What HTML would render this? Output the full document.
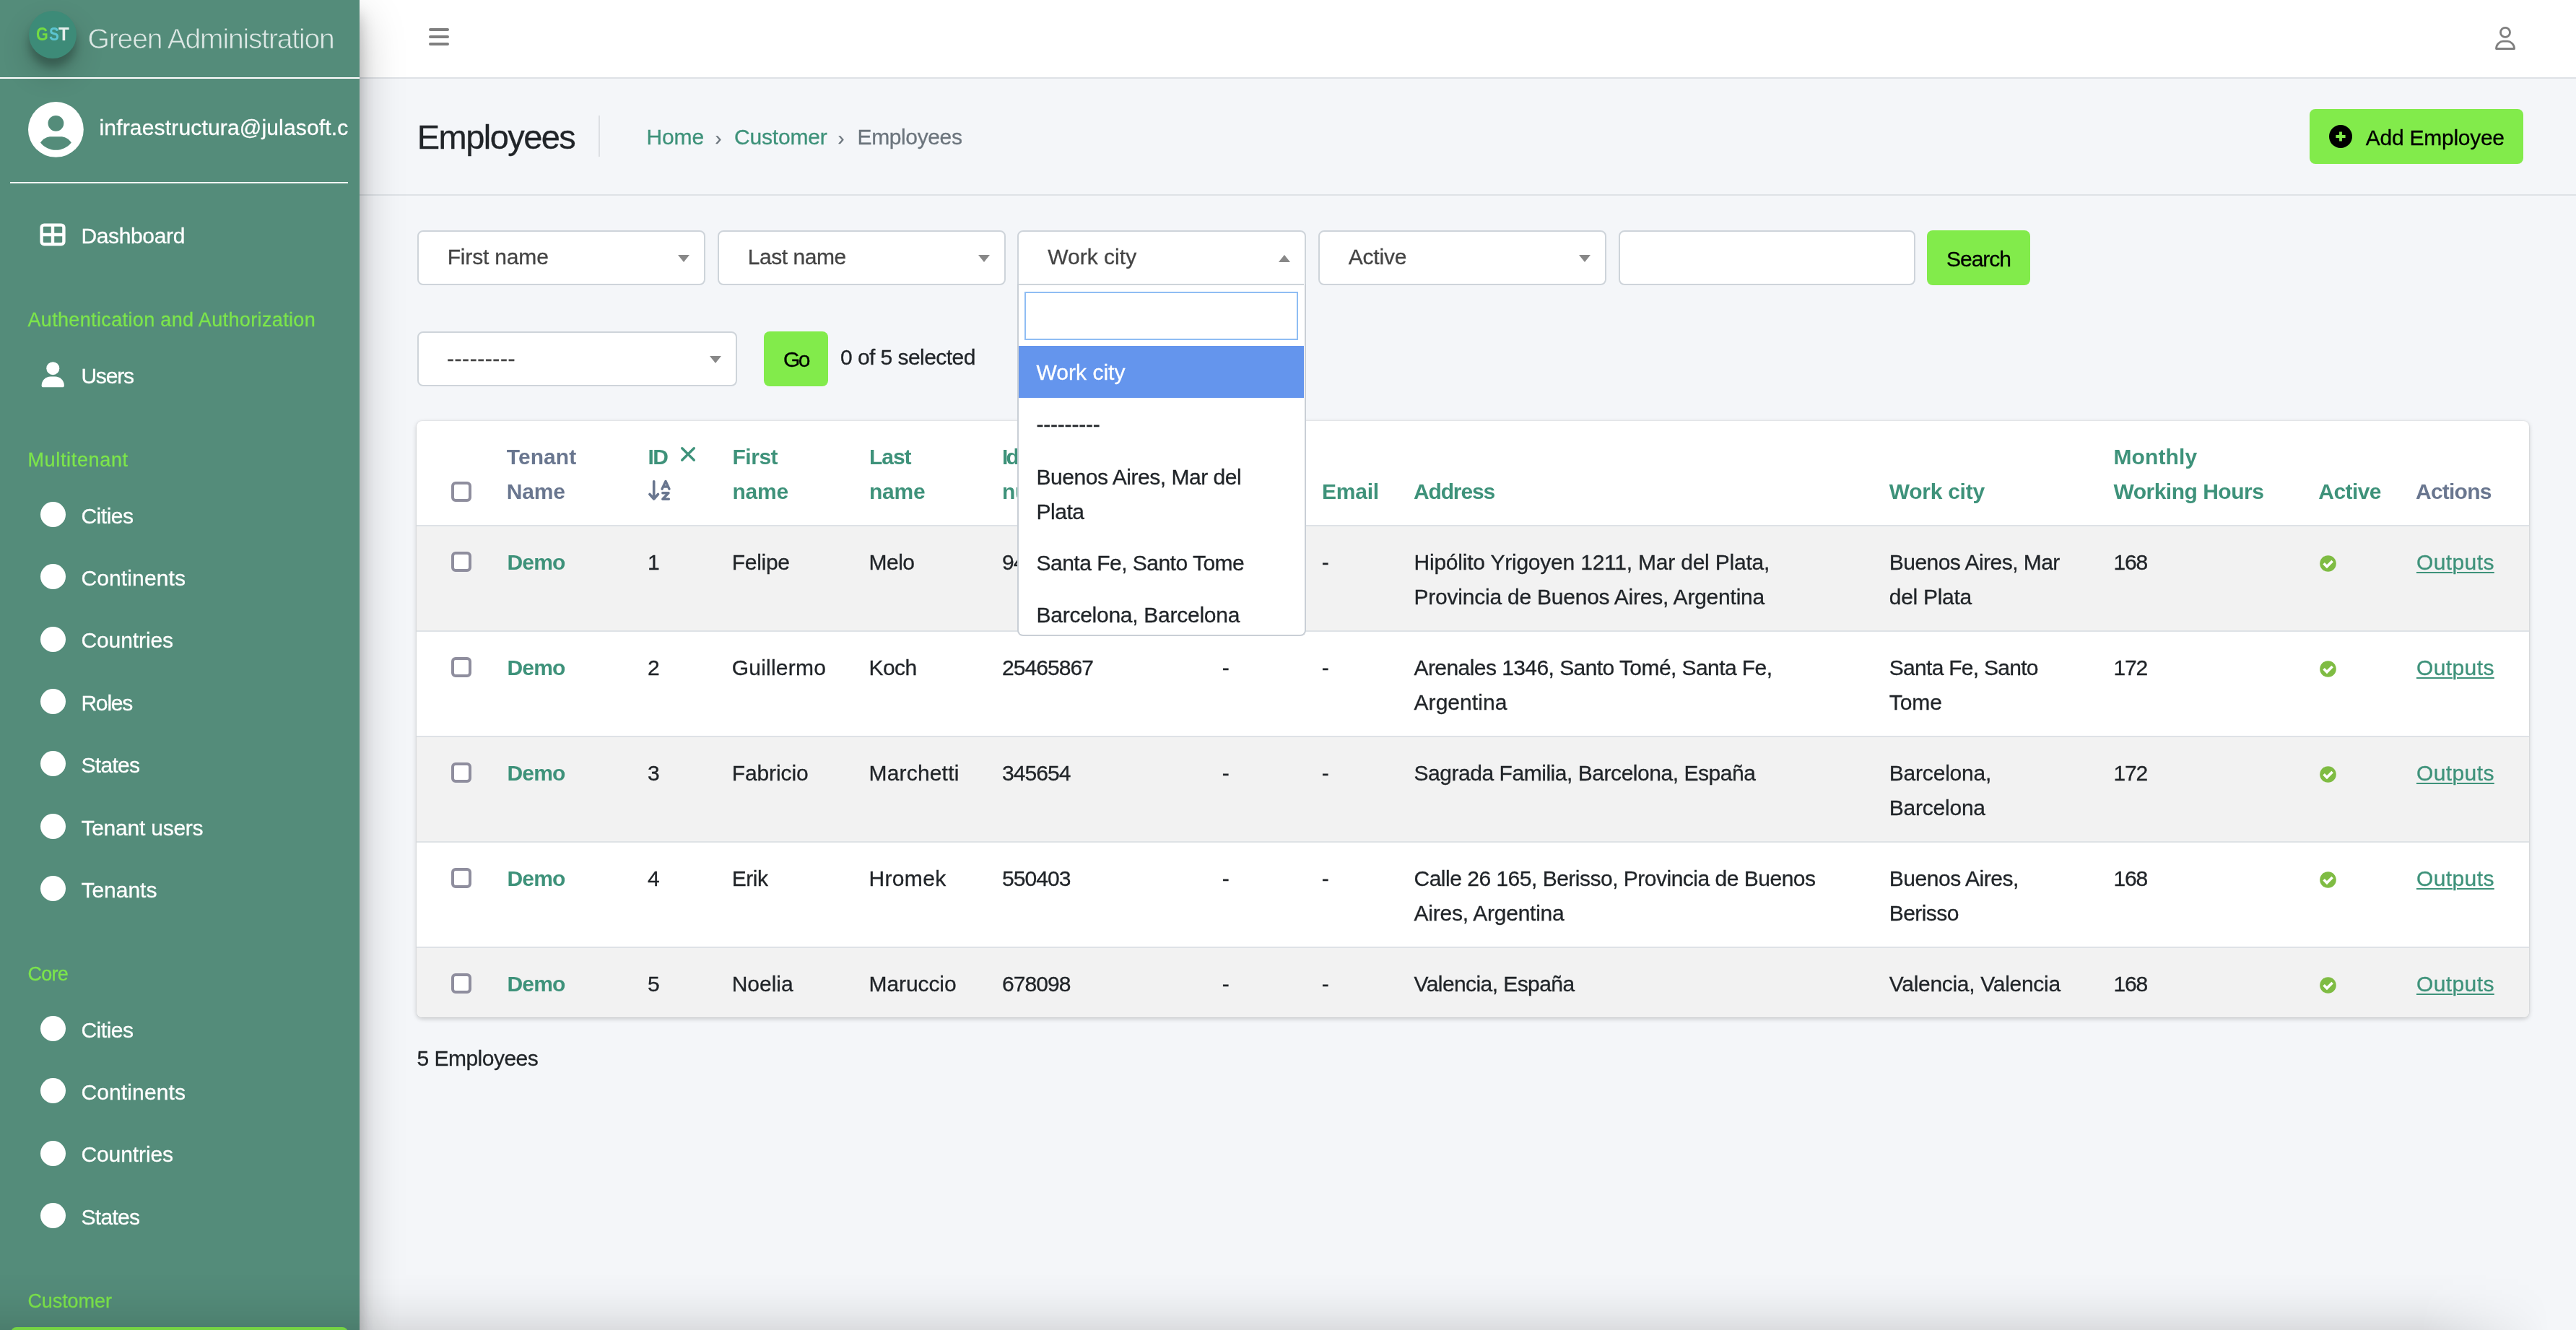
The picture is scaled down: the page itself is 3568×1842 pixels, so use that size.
<!DOCTYPE html>
<html lang="en"><head><meta charset="utf-8"><title>Employees | Green Administration</title>
<style>
*{box-sizing:border-box}
html,body{margin:0;padding:0}
body{width:3568px;height:1842px;overflow:hidden;position:relative;background:#f4f6f9;font-family:"Liberation Sans",sans-serif;font-size:30px;color:#212529}
.t{position:absolute;white-space:nowrap;line-height:1;display:block}
.r{-webkit-text-stroke:.3px}
.a{position:absolute}
#sidebar{left:0;top:0;width:498px;height:1842px;background:#548c7a;box-shadow:0 28px 56px rgba(0,0,0,.25),0 20px 20px rgba(0,0,0,.22);z-index:5;overflow:hidden}
#navbar{left:498px;top:0;width:3070px;height:109px;background:#fff;border-bottom:2px solid #dee2e6}
#chead{left:498px;top:109px;width:3070px;height:162px;border-bottom:2px solid #dee2e6}
.sel{position:absolute;height:76px;background:#fff;border:2px solid #ced4da;border-radius:8px}
.arr{position:absolute;width:0;height:0;border-left:8px solid transparent;border-right:8px solid transparent;border-top:10px solid #888}
.arr.up{border-top:0;border-bottom:10px solid #888}
.btn{position:absolute;background:#82eb4b;border-radius:8px}
.dot{position:absolute;width:35px;height:35px;border-radius:50%;background:#fff;left:55.5px}
.cb{position:absolute;width:28px;height:28px;border:4px solid #8f8e9e;border-radius:6px;background:#fff;left:625px}
.row{position:absolute;left:0;width:2926px;border-top:2px solid #dee2e6}
.odd{background:#f2f2f2}
#card{left:577px;top:582.5px;width:2926px;height:826.5px;background:#fff;border-radius:8px;box-shadow:0 0 2px rgba(0,0,0,.125),0 2px 6px rgba(0,0,0,.2);overflow:hidden}
.u{text-decoration:underline;text-decoration-thickness:2px;text-underline-offset:3px}
#all{position:absolute;left:0;top:0;width:3568px;height:1842px;will-change:transform}
</style></head><body><div id="all">

<div class="a" id="navbar"></div>
<svg class="a" style="left:594px;top:39px" width="28" height="24" viewBox="0 0 28 24"><g fill="#7f7f7f"><rect x="0" y="0" width="28" height="4" rx="2"></rect><rect x="0" y="10" width="28" height="4" rx="2"></rect><rect x="0" y="20" width="28" height="4" rx="2"></rect></g></svg>
<svg class="a" style="left:3455px;top:36px" width="30" height="34" viewBox="0 0 30 34"><g fill="none" stroke="#7f7f7f" stroke-width="2.8"><circle cx="15" cy="8.9" r="6.5"></circle><path d="M2.5 31.5 C2.5 25 8 21.2 12 21.2 H18 C22 21.2 27.6 25 27.6 31.5 Z" stroke-linejoin="round"></path></g></svg>
<div class="a" id="chead"></div>
<span class="t r" style="left: 577.8px; top: 165.9px; font-size: 47px; color: rgb(33, 37, 41); letter-spacing: -1.556px;">Employees</span>
<div class="a" style="left:829px;top:160px;width:2px;height:57px;background:#dcdfe3"></div>
<span class="t r" style="left: 895.5px; top: 175.2px; font-size: 30px; color: rgb(62, 146, 122); letter-spacing: -0.133px;">Home</span>
<span class="t r" style="left:990.5px;top:178.9px;font-size:27px;color:#6c757d;">›</span>
<span class="t r" style="left: 1017px; top: 175.2px; font-size: 30px; color: rgb(62, 146, 122); letter-spacing: -0.193px;">Customer</span>
<span class="t r" style="left:1160.5px;top:178.9px;font-size:27px;color:#6c757d;">›</span>
<span class="t r" style="left: 1187.5px; top: 175.2px; font-size: 30px; color: rgb(108, 117, 125); letter-spacing: -0.378px;">Employees</span>
<div class="btn" style="left:3199px;top:151px;width:296px;height:76px"></div>
<svg class="a" style="left:3225.5px;top:172.8px" width="32" height="32" viewBox="0 0 32 32"><circle cx="16" cy="16" r="16" fill="#000"></circle><path d="M16 9.4v13.2M9.4 16h13.2" stroke="#82eb4b" stroke-width="3.8"></path></svg>
<span class="t r" style="left: 3276.8px; top: 175.6px; font-size: 30px; color: rgb(0, 0, 0); letter-spacing: -0.26px;">Add Employee</span>
<div class="sel" style="left:577.5px;top:319px;width:399px;"></div>
<div class="arr" style="left:939.0px;top:353px"></div>
<span class="t r" style="left: 619.7px; top: 340.8px; font-size: 30px; color: rgb(68, 68, 68); letter-spacing: -0.17px;">First name</span>
<div class="sel" style="left:993.5px;top:319px;width:399px;"></div>
<div class="arr" style="left:1355.0px;top:353px"></div>
<span class="t r" style="left: 1035.7px; top: 340.8px; font-size: 30px; color: rgb(68, 68, 68); letter-spacing: -0.455px;">Last name</span>
<div class="sel" style="left:1409px;top:319px;width:399.5px;border-radius:8px 8px 0 0;"></div>
<div class="arr up" style="left:1771.0px;top:353px"></div>
<span class="t r" style="left: 1451.2px; top: 340.8px; font-size: 30px; color: rgb(68, 68, 68); letter-spacing: 0.023px;">Work city</span>
<div class="sel" style="left:1825.5px;top:319px;width:399px;"></div>
<div class="arr" style="left:2187.0px;top:353px"></div>
<span class="t r" style="left: 1867.7px; top: 340.8px; font-size: 30px; color: rgb(68, 68, 68); letter-spacing: -0.201px;">Active</span>
<div class="sel" style="left:2242px;top:319px;width:410.5px"></div>
<div class="btn" style="left:2669px;top:319px;width:143px;height:76px"></div>
<span class="t r" style="left: 2696px; top: 344.2px; font-size: 30px; color: rgb(0, 0, 0); letter-spacing: -1.01px;">Search</span>
<div class="sel" style="left:577.5px;top:459px;width:443px;height:76px"></div>
<div class="arr" style="left:983px;top:492.5px"></div>
<span class="t r" style="left: 619px; top: 481.6px; font-size: 30px; color: rgb(68, 68, 68); letter-spacing: 0.564px;">---------</span>
<div class="btn" style="left:1058px;top:459px;width:89px;height:76px"></div>
<span class="t r" style="left: 1085px; top: 483px; font-size: 30px; color: rgb(0, 0, 0); letter-spacing: -2.516px;">Go</span>
<span class="t r" style="left: 1164px; top: 480px; font-size: 30px; letter-spacing: -0.556px;">0 of 5 selected</span>
<div class="a" id="card">
<div class="row odd" style="top:144.5px;height:148.0px"></div>
<div class="row" style="top:290.5px;height:148.0px"></div>
<div class="row odd" style="top:436.5px;height:148.0px"></div>
<div class="row" style="top:582.5px;height:148.0px"></div>
<div class="row odd" style="top:728.5px;height:98.5px"></div>
</div>
<div class="cb" style="top:666.5px"></div>
<span class="t " style="left: 701.8px; top: 617.8px; font-size: 30px; font-weight: 700; color: rgb(105, 118, 143); letter-spacing: 0.048px;">Tenant</span>
<span class="t " style="left: 701.8px; top: 665.6px; font-size: 30px; font-weight: 700; color: rgb(105, 118, 143); letter-spacing: -0.18px;">Name</span>
<span class="t " style="left: 897.5px; top: 617.8px; font-size: 30px; font-weight: 700; color: rgb(62, 146, 122); letter-spacing: -1.5px;">ID</span>
<svg class="a" style="left:941px;top:617px" width="24" height="24" viewBox="0 0 24 24"><path d="M3.7 3.7 L20.3 20.3 M20.3 3.7 L3.7 20.3" stroke="#3e927a" stroke-width="3.4" stroke-linecap="round" fill="none"></path></svg>
<svg class="a" style="left:896px;top:663px" width="36" height="32" viewBox="0 0 36 32"><g fill="none" stroke="#69768f" stroke-width="3.6" stroke-linecap="round" stroke-linejoin="round"><path d="M9.7 3.8 V27.5 M3.9 21.5 L9.7 28 L15.5 21.5"></path><path d="M21 14.2 L26 3.6 L31 14.2 M23 11 H29" stroke-width="3.4"></path><path d="M21.8 19.8 H30 L21.8 28.2 H30.4" stroke-width="3.4"></path></g></svg>
<span class="t " style="left: 1014.5px; top: 617.8px; font-size: 30px; font-weight: 700; color: rgb(62, 146, 122); letter-spacing: -0.483px;">First</span>
<span class="t " style="left: 1014.5px; top: 665.6px; font-size: 30px; font-weight: 700; color: rgb(62, 146, 122); letter-spacing: -0.219px;">name</span>
<span class="t " style="left: 1204px; top: 617.8px; font-size: 30px; font-weight: 700; color: rgb(62, 146, 122); letter-spacing: -1.047px;">Last</span>
<span class="t " style="left: 1204px; top: 665.6px; font-size: 30px; font-weight: 700; color: rgb(62, 146, 122); letter-spacing: -0.219px;">name</span>
<span class="t " style="left: 1388px; top: 617.8px; font-size: 30px; font-weight: 700; color: rgb(62, 146, 122); letter-spacing: -2.836px;">Id</span>
<span class="t " style="left: 1388px; top: 665.6px; font-size: 30px; font-weight: 700; color: rgb(62, 146, 122); letter-spacing: -0.336px;">number</span>
<span class="t " style="left: 1692px; top: 665.6px; font-size: 30px; font-weight: 700; color: rgb(62, 146, 122); letter-spacing: -0.734px;">Phone</span>
<span class="t " style="left: 1831px; top: 665.6px; font-size: 30px; font-weight: 700; color: rgb(62, 146, 122); letter-spacing: -0.209px;">Email</span>
<span class="t " style="left: 1958px; top: 665.6px; font-size: 30px; font-weight: 700; color: rgb(62, 146, 122); letter-spacing: -1.15px;">Address</span>
<span class="t " style="left: 2616.8px; top: 665.6px; font-size: 30px; font-weight: 700; color: rgb(62, 146, 122); letter-spacing: -0.278px;">Work city</span>
<span class="t " style="left: 2927.4px; top: 617.8px; font-size: 30px; font-weight: 700; color: rgb(62, 146, 122); letter-spacing: 0.145px;">Monthly</span>
<span class="t " style="left: 2927.4px; top: 665.6px; font-size: 30px; font-weight: 700; color: rgb(62, 146, 122); letter-spacing: -0.496px;">Working Hours</span>
<span class="t " style="left: 3211.3px; top: 665.6px; font-size: 30px; font-weight: 700; color: rgb(62, 146, 122); letter-spacing: -0.558px;">Active</span>
<span class="t " style="left: 3346px; top: 665.6px; font-size: 30px; font-weight: 700; color: rgb(105, 118, 143); letter-spacing: -0.774px;">Actions</span>
<div class="cb" style="top:764px"></div>
<span class="t " style="left: 702.5px; top: 763.6px; font-size: 30px; font-weight: 700; color: rgb(62, 146, 122); letter-spacing: -0.84px;">Demo</span>
<span class="t r" style="left: 897px; top: 763.6px; font-size: 30px; letter-spacing: -1.688px;">1</span>
<span class="t r" style="left: 1013.7px; top: 763.6px; font-size: 30px; letter-spacing: -0.286px;">Felipe</span>
<span class="t r" style="left: 1203.5px; top: 763.6px; font-size: 30px; letter-spacing: -0.508px;">Melo</span>
<span class="t r" style="left: 1388px; top: 763.6px; font-size: 30px; letter-spacing: -0.936px;">94321756</span>
<span class="t r" style="left: 1692.8px; top: 763.6px; font-size: 30px; letter-spacing: -1px;">-</span>
<span class="t r" style="left: 1830.8px; top: 763.6px; font-size: 30px; letter-spacing: -1px;">-</span>
<span class="t r" style="left: 1958.5px; top: 763.6px; font-size: 30px; letter-spacing: -0.217px;">Hipólito Yrigoyen 1211, Mar del Plata,</span>
<span class="t r" style="left: 1958.5px; top: 811.6px; font-size: 30px; letter-spacing: -0.226px;">Provincia de Buenos Aires, Argentina</span>
<span class="t r" style="left: 2616.8px; top: 763.6px; font-size: 30px; letter-spacing: -0.537px;">Buenos Aires, Mar</span>
<span class="t r" style="left: 2616.8px; top: 811.6px; font-size: 30px; letter-spacing: -0.306px;">del Plata</span>
<span class="t r" style="left: 2927.5px; top: 763.6px; font-size: 30px; letter-spacing: -1.188px;">168</span>
<svg class="a" style="left:3212.5px;top:769.3px" width="23" height="23" viewBox="0 0 23 23"><circle cx="11.5" cy="11.5" r="11.3" fill="#7fbc43"></circle><path d="M5.6 11.3 L10 15.6 L17.6 8" stroke="#fff" stroke-width="3.6" fill="none"></path></svg>
<span class="t u r" style="left: 3347px; top: 763.6px; font-size: 30px; color: rgb(62, 146, 122); letter-spacing: 0.391px;">Outputs</span>
<div class="cb" style="top:910px"></div>
<span class="t " style="left: 702.5px; top: 909.6px; font-size: 30px; font-weight: 700; color: rgb(62, 146, 122); letter-spacing: -0.84px;">Demo</span>
<span class="t r" style="left: 897px; top: 909.6px; font-size: 30px; letter-spacing: -1.688px;">2</span>
<span class="t r" style="left: 1013.7px; top: 909.6px; font-size: 30px; letter-spacing: 0.225px;">Guillermo</span>
<span class="t r" style="left: 1203.5px; top: 909.6px; font-size: 30px; letter-spacing: -0.598px;">Koch</span>
<span class="t r" style="left: 1388px; top: 909.6px; font-size: 30px; letter-spacing: -0.936px;">25465867</span>
<span class="t r" style="left: 1692.8px; top: 909.6px; font-size: 30px; letter-spacing: -1px;">-</span>
<span class="t r" style="left: 1830.8px; top: 909.6px; font-size: 30px; letter-spacing: -1px;">-</span>
<span class="t r" style="left: 1958.5px; top: 909.6px; font-size: 30px; letter-spacing: -0.568px;">Arenales 1346, Santo Tomé, Santa Fe,</span>
<span class="t r" style="left: 1958.5px; top: 957.6px; font-size: 30px; letter-spacing: 0.063px;">Argentina</span>
<span class="t r" style="left: 2616.8px; top: 909.6px; font-size: 30px; letter-spacing: -0.721px;">Santa Fe, Santo</span>
<span class="t r" style="left: 2616.8px; top: 957.6px; font-size: 30px; letter-spacing: -0.09px;">Tome</span>
<span class="t r" style="left: 2927.5px; top: 909.6px; font-size: 30px; letter-spacing: -1.188px;">172</span>
<svg class="a" style="left:3212.5px;top:915.3px" width="23" height="23" viewBox="0 0 23 23"><circle cx="11.5" cy="11.5" r="11.3" fill="#7fbc43"></circle><path d="M5.6 11.3 L10 15.6 L17.6 8" stroke="#fff" stroke-width="3.6" fill="none"></path></svg>
<span class="t u r" style="left: 3347px; top: 909.6px; font-size: 30px; color: rgb(62, 146, 122); letter-spacing: 0.391px;">Outputs</span>
<div class="cb" style="top:1056px"></div>
<span class="t " style="left: 702.5px; top: 1055.6px; font-size: 30px; font-weight: 700; color: rgb(62, 146, 122); letter-spacing: -0.84px;">Demo</span>
<span class="t r" style="left: 897px; top: 1055.6px; font-size: 30px; letter-spacing: -1.688px;">3</span>
<span class="t r" style="left: 1013.7px; top: 1055.6px; font-size: 30px; letter-spacing: -0.088px;">Fabricio</span>
<span class="t r" style="left: 1203.5px; top: 1055.6px; font-size: 30px; letter-spacing: 0.181px;">Marchetti</span>
<span class="t r" style="left: 1388px; top: 1055.6px; font-size: 30px; letter-spacing: -0.935px;">345654</span>
<span class="t r" style="left: 1692.8px; top: 1055.6px; font-size: 30px; letter-spacing: -1px;">-</span>
<span class="t r" style="left: 1830.8px; top: 1055.6px; font-size: 30px; letter-spacing: -1px;">-</span>
<span class="t r" style="left: 1958.5px; top: 1055.6px; font-size: 30px; letter-spacing: -0.46px;">Sagrada Familia, Barcelona, España</span>
<span class="t r" style="left: 2616.8px; top: 1055.6px; font-size: 30px; letter-spacing: -0.204px;">Barcelona,</span>
<span class="t r" style="left: 2616.8px; top: 1103.6px; font-size: 30px; letter-spacing: -0.233px;">Barcelona</span>
<span class="t r" style="left: 2927.5px; top: 1055.6px; font-size: 30px; letter-spacing: -1.188px;">172</span>
<svg class="a" style="left:3212.5px;top:1061.3px" width="23" height="23" viewBox="0 0 23 23"><circle cx="11.5" cy="11.5" r="11.3" fill="#7fbc43"></circle><path d="M5.6 11.3 L10 15.6 L17.6 8" stroke="#fff" stroke-width="3.6" fill="none"></path></svg>
<span class="t u r" style="left: 3347px; top: 1055.6px; font-size: 30px; color: rgb(62, 146, 122); letter-spacing: 0.391px;">Outputs</span>
<div class="cb" style="top:1202px"></div>
<span class="t " style="left: 702.5px; top: 1201.6px; font-size: 30px; font-weight: 700; color: rgb(62, 146, 122); letter-spacing: -0.84px;">Demo</span>
<span class="t r" style="left: 897px; top: 1201.6px; font-size: 30px; letter-spacing: -1.688px;">4</span>
<span class="t r" style="left: 1013.7px; top: 1201.6px; font-size: 30px; letter-spacing: -0.418px;">Erik</span>
<span class="t r" style="left: 1203.5px; top: 1201.6px; font-size: 30px; letter-spacing: 0.331px;">Hromek</span>
<span class="t r" style="left: 1388px; top: 1201.6px; font-size: 30px; letter-spacing: -0.935px;">550403</span>
<span class="t r" style="left: 1692.8px; top: 1201.6px; font-size: 30px; letter-spacing: -1px;">-</span>
<span class="t r" style="left: 1830.8px; top: 1201.6px; font-size: 30px; letter-spacing: -1px;">-</span>
<span class="t r" style="left: 1958.5px; top: 1201.6px; font-size: 30px; letter-spacing: -0.5px;">Calle 26 165, Berisso, Provincia de Buenos</span>
<span class="t r" style="left: 1958.5px; top: 1249.6px; font-size: 30px; letter-spacing: -0.237px;">Aires, Argentina</span>
<span class="t r" style="left: 2616.8px; top: 1201.6px; font-size: 30px; letter-spacing: -0.471px;">Buenos Aires,</span>
<span class="t r" style="left: 2616.8px; top: 1249.6px; font-size: 30px; letter-spacing: -0.578px;">Berisso</span>
<span class="t r" style="left: 2927.5px; top: 1201.6px; font-size: 30px; letter-spacing: -1.188px;">168</span>
<svg class="a" style="left:3212.5px;top:1207.3px" width="23" height="23" viewBox="0 0 23 23"><circle cx="11.5" cy="11.5" r="11.3" fill="#7fbc43"></circle><path d="M5.6 11.3 L10 15.6 L17.6 8" stroke="#fff" stroke-width="3.6" fill="none"></path></svg>
<span class="t u r" style="left: 3347px; top: 1201.6px; font-size: 30px; color: rgb(62, 146, 122); letter-spacing: 0.391px;">Outputs</span>
<div class="cb" style="top:1348px"></div>
<span class="t " style="left: 702.5px; top: 1347.6px; font-size: 30px; font-weight: 700; color: rgb(62, 146, 122); letter-spacing: -0.84px;">Demo</span>
<span class="t r" style="left: 897px; top: 1347.6px; font-size: 30px; letter-spacing: -1.688px;">5</span>
<span class="t r" style="left: 1013.7px; top: 1347.6px; font-size: 30px; letter-spacing: -0.01px;">Noelia</span>
<span class="t r" style="left: 1203.5px; top: 1347.6px; font-size: 30px; letter-spacing: -0.088px;">Maruccio</span>
<span class="t r" style="left: 1388px; top: 1347.6px; font-size: 30px; letter-spacing: -0.935px;">678098</span>
<span class="t r" style="left: 1692.8px; top: 1347.6px; font-size: 30px; letter-spacing: -1px;">-</span>
<span class="t r" style="left: 1830.8px; top: 1347.6px; font-size: 30px; letter-spacing: -1px;">-</span>
<span class="t r" style="left: 1958.5px; top: 1347.6px; font-size: 30px; letter-spacing: -0.58px;">Valencia, España</span>
<span class="t r" style="left: 2616.8px; top: 1347.6px; font-size: 30px; letter-spacing: -0.299px;">Valencia, Valencia</span>
<span class="t r" style="left: 2927.5px; top: 1347.6px; font-size: 30px; letter-spacing: -1.188px;">168</span>
<svg class="a" style="left:3212.5px;top:1353.3px" width="23" height="23" viewBox="0 0 23 23"><circle cx="11.5" cy="11.5" r="11.3" fill="#7fbc43"></circle><path d="M5.6 11.3 L10 15.6 L17.6 8" stroke="#fff" stroke-width="3.6" fill="none"></path></svg>
<span class="t u r" style="left: 3347px; top: 1347.6px; font-size: 30px; color: rgb(62, 146, 122); letter-spacing: 0.391px;">Outputs</span>
<span class="t r" style="left: 577.5px; top: 1450.6px; font-size: 30px; letter-spacing: -0.522px;">5 Employees</span>
<div class="a" style="left:1409px;top:393px;width:399.5px;height:488px;background:#fff;border:2px solid #c9cfd6;border-top:0;border-radius:0 0 8px 8px;overflow:hidden">
<div class="a" style="left:0;top:0;width:395px;height:2px;background:#ced4da"></div>
<div class="a" style="left:8px;top:10.5px;width:379px;height:67px;border:2px solid #8fbdf3;background:#fff"></div>
<div class="a" style="left:0;top:86px;width:395px;height:72px;background:#6495ed"></div>
</div>
<span class="t r" style="left: 1435.5px; top: 501.4px; font-size: 30px; color: rgb(255, 255, 255); letter-spacing: 0.023px;">Work city</span>
<span class="t r" style="left: 1435.5px; top: 573.2px; font-size: 30px; color: rgb(33, 37, 41); letter-spacing: -0.214px;">---------</span>
<span class="t r" style="left: 1435.5px; top: 645.6px; font-size: 30px; color: rgb(33, 37, 41); letter-spacing: -0.466px;">Buenos Aires, Mar del</span>
<span class="t r" style="left: 1435.5px; top: 693.6px; font-size: 30px; color: rgb(33, 37, 41); letter-spacing: -0.478px;">Plata</span>
<span class="t r" style="left: 1435.5px; top: 765.1px; font-size: 30px; color: rgb(33, 37, 41); letter-spacing: -0.513px;">Santa Fe, Santo Tome</span>
<span class="t r" style="left: 1435.5px; top: 837.3px; font-size: 30px; color: rgb(33, 37, 41); letter-spacing: -0.263px;">Barcelona, Barcelona</span>
<div class="a" id="sidebar">
<div class="a" style="left:40px;top:15px;width:66px;height:66px;border-radius:50%;background:#3d8b78;box-shadow:0 20px 40px rgba(0,0,0,.19),0 12px 12px rgba(0,0,0,.23)"></div>
<div class="a" style="left:0;top:107px;width:498px;height:2px;background:#fff"></div>
<svg class="a" style="left:39.4px;top:140.9px" width="77" height="77" viewBox="0 0 77 77"><circle cx="38.4" cy="38.4" r="38.4" fill="#fff"></circle><circle cx="38.4" cy="29.8" r="10.9" fill="#548c7a"></circle><path d="M17 56.6 C21 50.5 26.5 48.2 32 48.2 H44.8 C50.3 48.2 55.8 50.5 59.8 56.6 C54.5 63 46.8 66.8 38.4 66.8 C30 66.8 22.3 63 17 56.6 Z" fill="#548c7a"></path></svg>
<div class="a" style="left:14px;top:252px;width:468px;height:2px;background:#fff"></div>
<div class="a" style="left:130px;top:150px;width:352px;height:60px;overflow:hidden">
<span class="t r" style="left: 7.5px; top: 12px; font-size: 30px; color: rgb(255, 255, 255); letter-spacing: 0.169px;">infraestructura@julasoft.c</span>
</div>
</div>
<div class="a" style="left:0;top:0;z-index:6">
<span class="t " style="left:50.2px;top:34.8px;font-size:25px;font-weight:700;color:#73db42;transform:scaleX(.86);transform-origin:0 0;">G</span>
<span class="t " style="left:67.6px;top:34.8px;font-size:25px;font-weight:700;color:#5cc4d0;transform:scaleX(.83);transform-origin:0 0;">S</span>
<span class="t " style="left:81.4px;top:34.8px;font-size:25px;font-weight:700;color:#e4eeeb;transform:scaleX(.97);transform-origin:0 0;">T</span>
<span class="t " style="left: 121.6px; top: 33.8px; font-size: 39px; color: rgb(221, 232, 229); -webkit-text-stroke: 0.75px rgb(84, 140, 122); letter-spacing: -1.159px;">Green Administration</span>
<svg class="a" style="left:55px;top:309.3px" width="36" height="32" viewBox="0 0 36 32"><g fill="none" stroke="#fff" stroke-width="4.4"><rect x="2.6" y="2.6" width="30.8" height="26.6" rx="3.5"></rect><path d="M18 3 V29 M3 16 H33"></path></g></svg>
<span class="t r" style="left: 112.4px; top: 312.4px; font-size: 30px; color: rgb(255, 255, 255); letter-spacing: -0.352px;">Dashboard</span>
<span class="t r" style="left: 38.4px; top: 430.1px; font-size: 27px; color: rgb(124, 229, 75); letter-spacing: 0.357px;">Authentication and Authorization</span>
<svg class="a" style="left:57px;top:500.7px" width="33" height="36" viewBox="0 0 33 36"><g fill="#fff"><circle cx="16.3" cy="9.2" r="9"></circle><path d="M0.6 33 C0.6 25.5 6.5 20.5 13 20.5 H19.5 C26 20.5 31.9 25.5 31.9 33 C31.9 34.5 31 35.3 29.6 35.3 H2.9 C1.5 35.3 0.6 34.5 0.6 33 Z"></path></g></svg>
<span class="t r" style="left: 112.4px; top: 506px; font-size: 30px; color: rgb(255, 255, 255); letter-spacing: -1.189px;">Users</span>
<span class="t r" style="left: 38.4px; top: 623.7px; font-size: 27px; color: rgb(124, 229, 75); letter-spacing: 0.666px;">Multitenant</span>
<div class="dot" style="top:694.8px"></div>
<span class="t r" style="left: 112.4px; top: 699.6px; font-size: 30px; color: rgb(255, 255, 255); letter-spacing: -0.469px;">Cities</span>
<div class="dot" style="top:781.2px"></div>
<span class="t r" style="left: 112.4px; top: 786px; font-size: 30px; color: rgb(255, 255, 255); letter-spacing: 0.136px;">Continents</span>
<div class="dot" style="top:867.6px"></div>
<span class="t r" style="left: 112.4px; top: 872.4px; font-size: 30px; color: rgb(255, 255, 255); letter-spacing: -0.09px;">Countries</span>
<div class="dot" style="top:954.0px"></div>
<span class="t r" style="left: 112.4px; top: 958.8px; font-size: 30px; color: rgb(255, 255, 255); letter-spacing: -1.181px;">Roles</span>
<div class="dot" style="top:1040.4px"></div>
<span class="t r" style="left: 112.4px; top: 1045.2px; font-size: 30px; color: rgb(255, 255, 255); letter-spacing: -0.677px;">States</span>
<div class="dot" style="top:1126.8px"></div>
<span class="t r" style="left: 112.4px; top: 1131.6px; font-size: 30px; color: rgb(255, 255, 255); letter-spacing: -0.232px;">Tenant users</span>
<div class="dot" style="top:1213.2px"></div>
<span class="t r" style="left: 112.4px; top: 1218px; font-size: 30px; color: rgb(255, 255, 255); letter-spacing: -0.011px;">Tenants</span>
<span class="t r" style="left: 38.4px; top: 1335.7px; font-size: 27px; color: rgb(124, 229, 75); letter-spacing: -0.708px;">Core</span>
<div class="dot" style="top:1406.8px"></div>
<span class="t r" style="left: 112.4px; top: 1411.6px; font-size: 30px; color: rgb(255, 255, 255); letter-spacing: -0.469px;">Cities</span>
<div class="dot" style="top:1493.2px"></div>
<span class="t r" style="left: 112.4px; top: 1498px; font-size: 30px; color: rgb(255, 255, 255); letter-spacing: 0.136px;">Continents</span>
<div class="dot" style="top:1579.6px"></div>
<span class="t r" style="left: 112.4px; top: 1584.4px; font-size: 30px; color: rgb(255, 255, 255); letter-spacing: -0.09px;">Countries</span>
<div class="dot" style="top:1666.0px"></div>
<span class="t r" style="left: 112.4px; top: 1670.8px; font-size: 30px; color: rgb(255, 255, 255); letter-spacing: -0.677px;">States</span>
<span class="t r" style="left: 38.4px; top: 1788.5px; font-size: 27px; color: rgb(124, 229, 75); letter-spacing: -0.079px;">Customer</span>
<div class="a" style="left:15px;top:1837.6px;width:467px;height:80px;border-radius:8px;background:#82eb4b"></div>
</div>
<div class="a" style="left:0;top:1762px;width:3568px;height:80px;z-index:9;background:linear-gradient(to bottom,rgba(0,0,0,0),rgba(0,0,0,.015) 35%,rgba(0,0,0,.05) 70%,rgba(0,0,0,.10));-webkit-mask-image:linear-gradient(to right,#000 94%,transparent 99%)"></div>
</div></body></html>
